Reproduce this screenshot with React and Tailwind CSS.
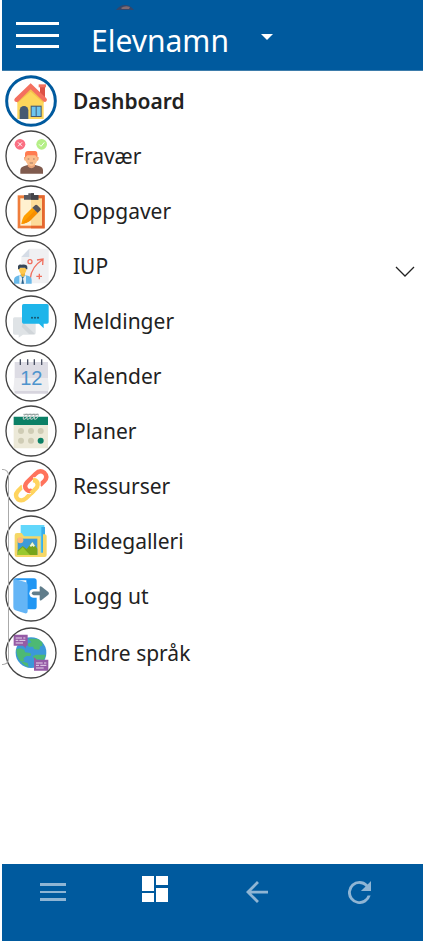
import React from 'react';

const DashboardIcon = () => (
  <>
    <path d="M105 34h15v36h-15z" fill="#dd5145" />
    <path d="M101 28h22v9h-22z" fill="#f4705f" />
    <path d="M37 74 77 36l39 40v56H37z" fill="#fdd75b" />
    <path d="M77 50l39 34v-8L77 38 37 76v8z" fill="#f5c04e" />
    <path d="M77 25 124 70q4 5 0 9-4 4-9 0L77 43 39 80q-5 3-10-1-3-4 1-9z" fill="#f4705f" />
    <path d="M44 132v-26a12 12 0 0 1 26 0v26z" fill="#465a72" />
    <path d="M77 92h33v34H77z" fill="#465a72" />
    <path d="M80 95h12v28H80zM95 95h12v28H95z" fill="#6dc5ee" />
  </>
);

const AbsenceIcon = () => (
  <>
    <circle cx="45" cy="43" r="16" fill="#fb6f82" />
    <path d="m39 37 12 12m0-12L39 49" stroke="#fff" strokeWidth="3" />
    <circle cx="110" cy="43" r="16" fill="#b5ef87" />
    <path d="m102 43 6 6 10-12" fill="none" stroke="#fff" strokeWidth="3" />
    <path d="M46 131v-10q0-9 10-12l14-5h18l16 5q10 3 10 12v10z" fill="#805b4e" />
    <path d="M68 97h22v12q-11 12-22 0z" fill="#e9a277" />
    <path d="M61 72h36v18q-2 13-18 19-15-6-18-19z" fill="#fbbd8b" />
    <path d="M57 81h5v12q-5-1-5-7zM96 81h5v5q0 6-5 7z" fill="#f2aa7c" />
    <path d="M60 83V72q0-9 9-9h21q7 0 7 8v12l-6-7H67z" fill="#ff7b50" />
    <path d="M68 87h5m11 0h5M74 99h10" stroke="#805b4e" strokeWidth="2" />
  </>
);

const TasksIcon = () => (
  <>
    <path d="M38 31h81v99H38z" fill="#ef7d3b" />
    <path d="M78 31h41v99H78z" fill="#e5672f" />
    <path d="M46 40h32v82H46z" fill="#fff1cf" />
    <path d="M78 40h33v82H78z" fill="#fddc9a" />
    <path d="M57 44V30h13v-5h17v5h13v14z" fill="#5b5a5f" />
    <path d="M78 25h9v5h13v14H78z" fill="#454449" />
    <path d="M49 117q3-18 10-26l23-23 16 16-23 23q-8 7-26 10z" fill="#ffa000" />
    <path d="M49 117 90 76l8 8-23 23q-8 7-26 10z" fill="#f78f00" />
    <path d="m82 68 9-8q3-2 6 1l9 9q3 3 0 6l-8 8z" fill="#55545a" />
  </>
);

const IupIcon = () => (
  <>
    <path d="M73 26h58v104H49V51z" fill="#f0f0f2" />
    <path d="M73 26v25H49z" fill="#d5dce6" />
    <g fill="none" stroke="#f0705f" strokeWidth="4">
      <circle cx="75" cy="65" r="6" />
      <path d="M76 115q4-36 36-55M96 60l18-3-1 18M94 109h17m-8-8v17" />
    </g>
    <path d="M27 131v-11q0-9 9-12l12-4h9l14 4q9 3 9 12v11z" fill="#69b9e9" />
    <path d="m43 105 10 10 10-10v26H43z" fill="#e6f0f6" />
    <path d="M50 111h6l-2 5 3 15h-8l3-15z" fill="#27618c" />
    <path d="M47 94h13v12l-7 6-6-6z" fill="#efb33c" />
    <path d="M41 83h24q0 17-12 19-12-2-12-19z" fill="#ffc84e" />
    <path d="M39 88V78q3-5 10-4 18-3 18 8v6h-3l-4-5H46l-4 5z" fill="#374657" />
  </>
);

const MessagesIcon = () => (
  <>
    <path d="M29 67h58q5 0 5 5v42q0 5-5 5H54l-13 9v-9H29q-5 0-5-5V72q0-5 5-5z" fill="#dfe3e6" />
    <path d="m54 83 36 34H72L50 95z" fill="#d0d5d9" />
    <path d="M56 27h70q5 0 5 5v49q0 5-5 5h-10v14L102 86H56q-5 0-5-5V32q0-5 5-5z" fill="#1eb5ea" />
    <circle cx="81" cy="68" r="3" fill="#16516a" />
    <circle cx="90" cy="68" r="3" fill="#16516a" />
    <circle cx="99" cy="68" r="3" fill="#16516a" />
  </>
);

const CalendarIcon = () => (
  <>
    <path d="M29 36h100v92H29z" fill="#dddce4" />
    <path d="M29 84h100l3 32q0 7-6 7H31q-6 0-6-7z" fill="#ececef" />
    <path d="M29 123h100v4q0 4-4 4H33q-4 0-4-4z" fill="#d7d5de" />
    <path d="M46 28v17m22-17v17m20-17v17m22-17v17" stroke="#4b5264" strokeWidth="4" />
    <text x="79" y="106" textAnchor="middle" className="font-['Liberation_Sans',sans-serif] text-[60px]" fill="#4d94cd">12</text>
  </>
);

const PlansIcon = () => (
  <>
    <path d="M26 55h103v75H26z" fill="#ece9d8" />
    <path d="M26 35h103v25H26z" fill="#0b8066" />
    <g fill="none" stroke="#c3ccca" strokeWidth="3">
      <ellipse cx="61" cy="35" rx="4" ry="9" transform="rotate(35 61 35)" />
      <ellipse cx="72" cy="35" rx="4" ry="9" transform="rotate(35 72 35)" />
      <ellipse cx="83" cy="35" rx="4" ry="9" transform="rotate(35 83 35)" />
      <ellipse cx="94" cy="35" rx="4" ry="9" transform="rotate(35 94 35)" />
    </g>
    <path d="M55 28h45" stroke="#6d7f7b" strokeWidth="2" />
    <g fill="#cfccb5">
      <circle cx="48" cy="78" r="9" />
      <circle cx="78" cy="78" r="9" />
      <circle cx="107" cy="78" r="9" />
      <circle cx="48" cy="107" r="9" />
      <circle cx="78" cy="107" r="9" />
    </g>
    <circle cx="107" cy="107" r="9" fill="#0b8066" />
  </>
);

const ResourcesIcon = () => (
  <g fill="none" strokeWidth="13">
    <path d="M84 60q14 1 14 14 0 6-6 12L64 114q-13 12-25 4-12-11 0-25l14-14" stroke="#ffd45e" />
    <path d="M83 89q-10 8-18 0-10-10 1-22l26-26q13-13 26-3 12 12 0 25l-13 13" stroke="#fff" strokeWidth="19" />
    <path d="M92 86 78 100" stroke="#ffd45e" />
    <path d="M82 90q-9 7-17-1-10-10 1-22l26-26q13-13 26-3 12 12 0 25l-13 13" stroke="#ff735c" />
    <path d="M84 60q14 1 14 14 0 6-6 12l-6 6" stroke="#fff" strokeWidth="18" />
    <path d="M84 60q14 1 14 14 0 6-6 12L78 100" stroke="#ffd45e" />
  </g>
);

const GalleryIcon = () => (
  <>
    <path d="M47 30h71v87H47z" fill="#62d7fb" />
    <path d="M109 36h11v85h-11z" fill="#39aeea" />
    <path d="M29 61q0-7 7-7h14l7 10h50v49h7V58h5q6 0 6 6v56q0 6-6 6H36q-7 0-7-6z" fill="#f5d766" />
    <path d="M38 71h59v49H38z" fill="#3e9bd8" />
    <circle cx="46" cy="76" r="9" fill="#ffb67d" />
    <path d="m38 106 15-13 12 9 17-21 15 20v19H38z" fill="#77a41b" />
    <path d="m74 92 8-11 8 11-4 4-4-4-4 4z" fill="#edf6de" />
    <path d="m38 111 15-14 22 23H38z" fill="#9ac82d" />
  </>
);

const LogoutIcon = () => (
  <>
    <path d="M25 31q0-6 8-6h54q8 0 8 8v77q0 8-8 8H64V31z" fill="#2196f3" />
    <path d="M25 32q0-6 7-4l29 8q7 2 7 9v79q0 8-8 6l-29-9q-6-2-6-9z" fill="#64b5f6" />
    <path d="M112 70H86" stroke="#fff" strokeWidth="26" strokeLinecap="round" />
    <path d="M86 70h24" stroke="#607d8b" strokeWidth="11" strokeLinecap="round" />
    <path d="M104 52q0-6 6-2l20 16q4 4 0 8l-20 16q-6 4-6-2z" fill="#607d8b" />
  </>
);

const LanguageIcon = () => (
  <>
    <circle cx="78" cy="77" r="46" fill="#3b98d9" />
    <path d="M69 35h20l12 2 11 9v10l-9 3q5 5-2 9l-12-1q-5-2-4-8H72q-7-5-1-11l9-2zM34 66l13-2 11 4 2 8 16 2q5 4 0 9H64l-9 7 4 8-12 2q-14-16-13-40zM83 88l10-5h29q-2 10-7 17l-14-3-11 4zM53 104l15 4 3 13q-14-4-22-15z" fill="#4db973" />
    <path d="M26 23h42v33h-5v8l-9-8H26z" fill="#955ba5" />
    <path d="M32 33h19m4 0h6m-29 7h8m3 0h18m-29 8h22" stroke="#e9d9ee" strokeWidth="3" />
    <path d="M87 99v-8l9 7h34v33H87z" fill="#955ba5" />
    <path d="M93 108h20m4 0h7m-31 7h9m4 0h18m-31 8h23" stroke="#e9d9ee" strokeWidth="3" />
  </>
);

const menuItems = [
  { label: 'Dashboard', Icon: DashboardIcon, active: true },
  { label: 'Fravær', Icon: AbsenceIcon },
  { label: 'Oppgaver', Icon: TasksIcon },
  { label: 'IUP', Icon: IupIcon, expandable: true },
  { label: 'Meldinger', Icon: MessagesIcon },
  { label: 'Kalender', Icon: CalendarIcon },
  { label: 'Planer', Icon: PlansIcon },
  { label: 'Ressurser', Icon: ResourcesIcon },
  { label: 'Bildegalleri', Icon: GalleryIcon },
  { label: 'Logg ut', Icon: LogoutIcon },
];

function MenuLink({ label, Icon, active, expandable }) {
  return (
    <a href="#" className="flex h-[55px] items-center pl-[3px] pr-2">
      <svg viewBox="0 0 156 156" className="size-[52px] shrink-0" aria-hidden="true">
        <Icon />
        <circle
          cx="78"
          cy="78"
          r={active ? 73 : 75}
          fill="none"
          stroke={active ? '#005a9e' : '#444'}
          strokeWidth={active ? 9 : 4}
        />
      </svg>
      <span className={`ml-4 grow pt-[2px] ${active ? 'font-semibold' : ''}`}>{label}</span>
      {expandable && (
        <svg viewBox="0 0 20 12" className="mt-3 h-3 w-5" fill="none" stroke="#222" aria-hidden="true">
          <path d="m1 1 9 9 9-9" strokeWidth="1.3" />
        </svg>
      )}
    </a>
  );
}

export default function App() {
  return (
    <div className="relative flex min-h-screen flex-col bg-white pl-[2px] font-['Noto_Sans',sans-serif] text-[21px] text-[#222]">
      <header className="relative flex h-[71px] items-center border-b border-[#3d7cab] bg-[#005a9e] pl-[14px] text-white">
        <button type="button" aria-label="Meny" className="flex h-[26px] w-[43px] flex-col justify-between">
          <span className="h-[3px] w-full bg-white" />
          <span className="h-[3px] w-full bg-white" />
          <span className="h-[3px] w-full bg-white" />
        </button>
        <button type="button" className="ml-8 flex items-center gap-8 pt-3 text-[30px] leading-10">
          Elevnamn
          <svg viewBox="0 0 12 6" className="-mt-2 h-[6px] w-3" fill="#fff" aria-hidden="true">
            <path d="M0 0h12L6 6z" />
          </svg>
        </button>
        {/* bottom edge of the profile picture */}
        <svg viewBox="0 0 20 5" className="absolute left-[113px] top-[5px] h-[5px] w-5" aria-hidden="true">
          <path d="M1 5Q5 0 10 0t9 5z" fill="#34476b" />
          <path d="M6 3q4-3 9-1l-1 2H7z" fill="#806b72" />
        </svg>
      </header>

      <nav className="grow pt-[2px]">
        {menuItems.map((item) => (
          <MenuLink key={item.label} {...item} />
        ))}
        <div className="pt-[2px]">
          <MenuLink label="Endre språk" Icon={LanguageIcon} />
        </div>
      </nav>

      {/* edge panel handle */}
      <div className="absolute left-[2px] top-[469px] h-[196px] w-[7px] rounded-r-[6px] border-y border-r border-[#aaa]" />

      <footer className="grid h-[77px] grid-cols-4 justify-items-center bg-[#005a9e] pr-[13px] pt-3 text-[#8fb5d4]">
        <button type="button" aria-label="Meny" className="flex h-8 items-center">
          <svg viewBox="0 0 26 18" className="h-[18px] w-[26px]" fill="currentColor" aria-hidden="true">
            <path d="M0 0h26v3H0zM0 8h26v2H0zM0 15h26v3H0z" />
          </svg>
        </button>
        <button type="button" aria-label="Dashboard" className="flex h-[26px] text-white">
          <svg viewBox="0 0 26 26" className="size-[26px]" fill="currentColor" aria-hidden="true">
            <path d="M0 0h12v15H0zM0 17h12v9H0zM14 0h12v9H14zM14 12h12v14H14z" />
          </svg>
        </button>
        <button type="button" aria-label="Tilbake" className="flex h-8 items-center">
          <svg viewBox="4 4 16 16" className="size-[22px]" fill="currentColor" aria-hidden="true">
            <path d="M20 11H7.83l5.59-5.59L12 4l-8 8 8 8 1.41-1.41L7.83 13H20v-2z" />
          </svg>
        </button>
        <button type="button" aria-label="Oppdater" className="flex h-8 items-center">
          <svg viewBox="4 4 16 16" className="size-[23px]" fill="currentColor" aria-hidden="true">
            <path d="M17.65 6.35A7.958 7.958 0 0 0 12 4a8 8 0 1 0 7.73 10h-2.08A6 6 0 1 1 12 6c1.66 0 3.14.69 4.22 1.78L13 11h7V4l-2.35 2.35z" />
          </svg>
        </button>
      </footer>
    </div>
  );
}
